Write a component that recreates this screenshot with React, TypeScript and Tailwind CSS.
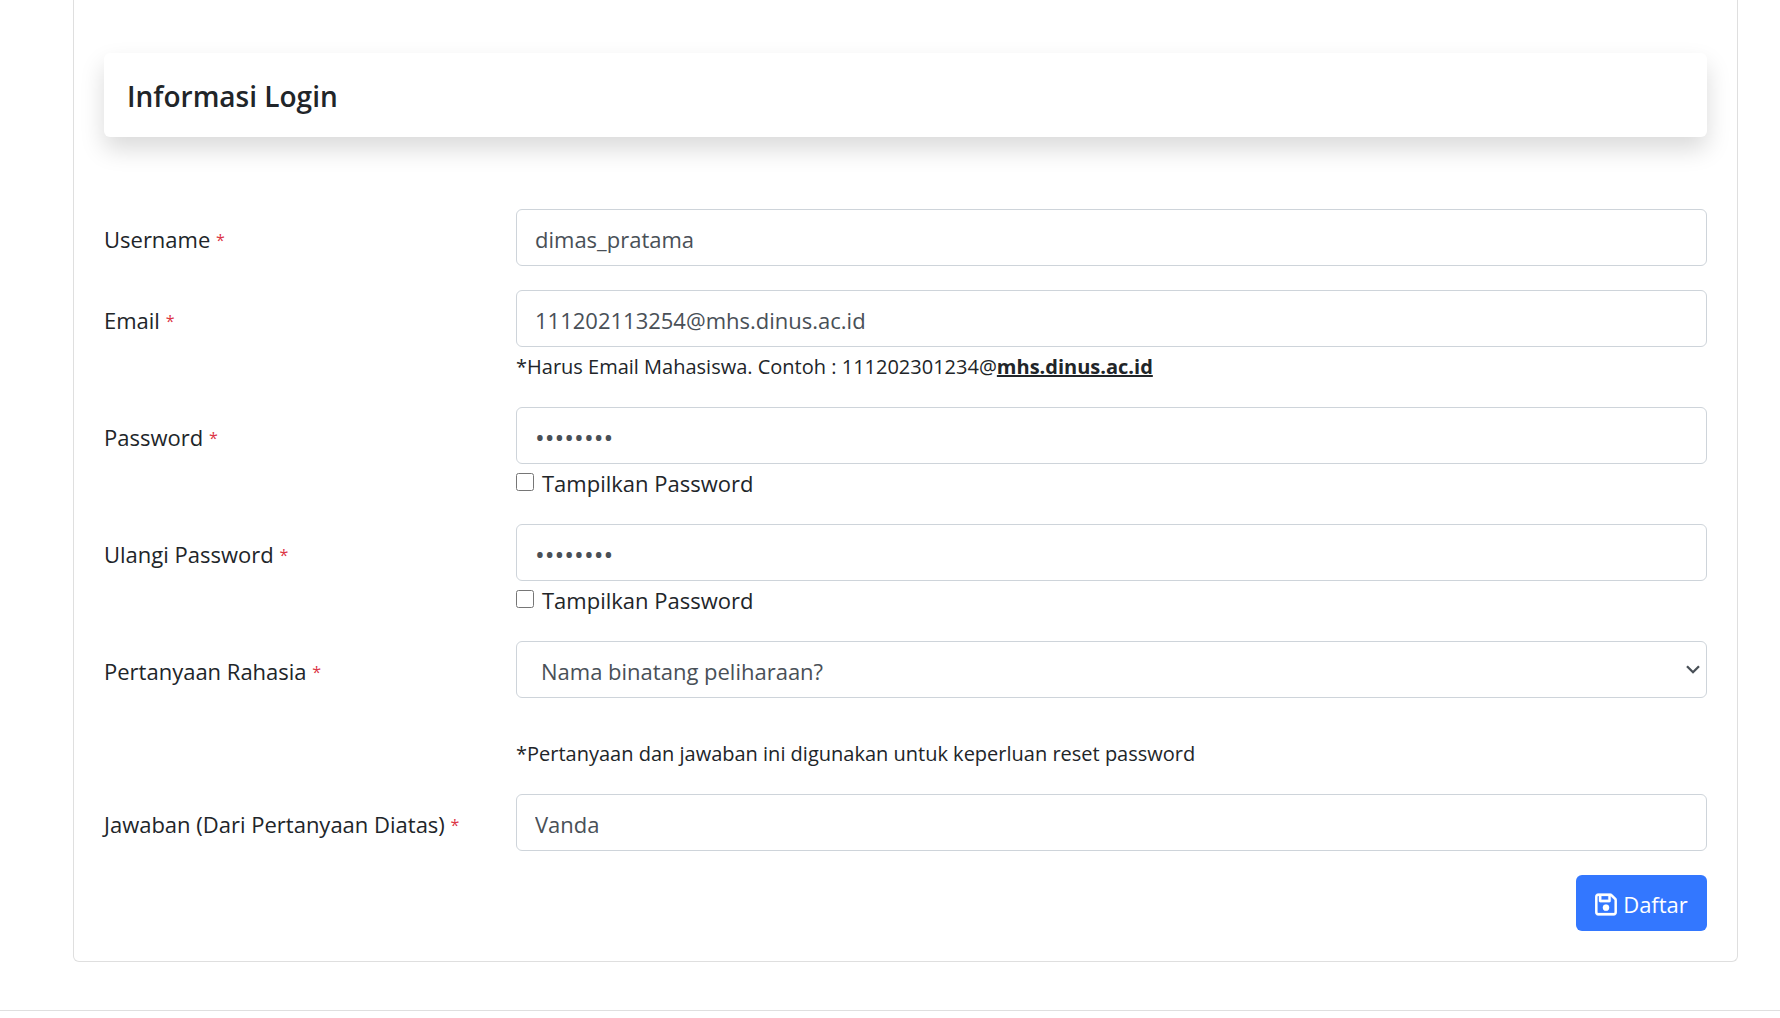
import { useState, type ReactNode } from "react";
import { FaRegFloppyDisk } from "react-icons/fa6";

const controlClass =
  "block h-[57px] w-full rounded-[6px] border border-[#ced4da] bg-white px-[18px] pt-[2px] leading-[36px] text-[#495057] outline-none focus:border-[#86b7fe]";

function Field({ id, label, children }: { id: string; label: string; children: ReactNode }) {
  return (
    <div className="grid grid-cols-4 gap-x-[45px]">
      <label htmlFor={id} className="h-[57px] whitespace-nowrap pt-[12px] leading-[36px]">
        {label} <span className="align-[2px] text-[16px] leading-none text-[#dc3545]">*</span>
      </label>
      <div className="col-span-3">{children}</div>
    </div>
  );
}

function PasswordField({ id, label }: { id: string; label: string }) {
  const [visible, setVisible] = useState(false);
  return (
    <Field id={id} label={label}>
      <input
        id={id}
        type={visible ? "text" : "password"}
        defaultValue="rahasia1"
        autoComplete="off"
        className={`${controlClass} ${visible ? "text-[22px]" : "text-[26px]"}`}
      />
      <label className="flex h-[36px] w-fit items-center gap-[8px]">
        <input
          type="checkbox"
          checked={visible}
          onChange={(e) => setVisible(e.target.checked)}
          className="size-[18px]"
        />
        <span className="pt-[2px]">Tampilkan Password</span>
      </label>
    </Field>
  );
}

export default function App() {
  return (
    <div className="bg-white font-['Segoe_UI','Open_Sans',sans-serif] text-[22px] text-[#212529]">
      <main className="mr-[42px] ml-[73px] rounded-b-[6px] border border-t-0 border-[#dfdfdf] px-[30px] pt-[53px] pb-[30px]">
        <div className="rounded-[6px] bg-white px-[23px] pt-[25px] pb-[23px] shadow-[0_12px_24px_rgba(0,0,0,0.15)]">
          <h2 className="text-[28px] leading-[36px] font-semibold">Informasi Login</h2>
        </div>

        <form className="mt-[72px] flex flex-col gap-[24px]" onSubmit={(e) => e.preventDefault()}>
          <Field id="username" label="Username">
            <input id="username" type="text" defaultValue="dimas_pratama" className={controlClass} />
          </Field>

          <Field id="email" label="Email">
            <input
              id="email"
              type="email"
              defaultValue="111202113254@mhs.dinus.ac.id"
              className={controlClass}
            />
            <p className="pt-[4px] text-[20px] leading-[32px]">
              *Harus Email Mahasiswa. Contoh : 111202301234@
              <b className="underline">mhs.dinus.ac.id</b>
            </p>
          </Field>

          <PasswordField id="password" label="Password" />
          <PasswordField id="password-repeat" label="Ulangi Password" />

          <Field id="question" label="Pertanyaan Rahasia">
            <div className="relative">
              <select id="question" className={`${controlClass} appearance-none pl-[24px]`}>
                <option>Nama binatang peliharaan?</option>
              </select>
              <svg
                viewBox="0 0 14 9"
                className="pointer-events-none absolute top-[24px] right-[7px] h-[9px] w-[14px]"
                fill="none"
                stroke="#495057"
                strokeWidth="2.3"
                aria-hidden="true"
              >
                <path d="M1 1.2 7 7.2 13 1.2" />
              </svg>
            </div>
            <p className="pt-[40px] text-[20px] leading-[32px]">
              *Pertanyaan dan jawaban ini digunakan untuk keperluan reset password
            </p>
          </Field>

          <Field id="answer" label="Jawaban (Dari Pertanyaan Diatas)">
            <input id="answer" type="text" defaultValue="Vanda" className={controlClass} />
          </Field>

          <button
            type="submit"
            className="flex h-[56px] min-w-[131px] items-center justify-center gap-[6px] self-end rounded-[6px] bg-[#3377ff] pt-[2px] text-white"
          >
            <FaRegFloppyDisk className="h-[25px] w-[22px] stroke-current" strokeWidth="6" />
            Daftar
          </button>
        </form>
      </main>
      <hr className="mt-[48px] border-[#dfdfdf]" />
    </div>
  );
}
